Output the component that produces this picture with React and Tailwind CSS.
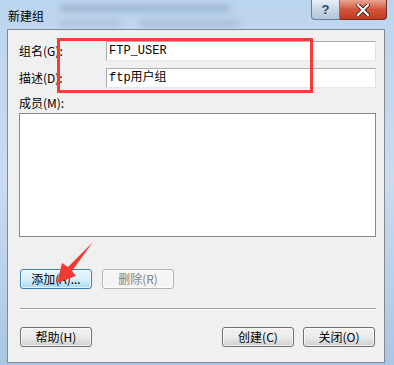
import React from "react";

const cjk = { fontFamily: '"Noto Sans CJK SC", "Liberation Sans", sans-serif' };
const mono = { fontFamily: '"Liberation Mono", "Noto Sans CJK SC", monospace' };

function Field({ label, value, mt }) {
  return (
    <div className={`flex items-center ${mt}`}>
      <div className="w-[98px] pl-[11px] text-[12px] text-black" style={cjk}>{label}</div>
      <div className="h-[20px] w-[270px] border border-[#abadb3] border-b-[#e3e9ef] border-r-[#dbdfe6] bg-white flex items-center pl-[2px] text-[12px] text-black" style={mono}>
        {value}
      </div>
    </div>
  );
}

function WinButton({ children, disabled, active, w = "w-[72px]" }) {
  let cls = "border-[#707070] bg-gradient-to-b from-[#f2f2f2] via-[#ebebeb] to-[#cfcfcf] text-black";
  if (active) cls = "border-[#3c7fb1] bg-gradient-to-b from-[#eaf6fd] via-[#d9f0fc] to-[#a7d9f5] text-black";
  if (disabled) cls = "border-[#adb2b5] bg-[#f4f4f4] text-[#838383]";
  return (
    <div className={`${w} h-[20px] rounded-[3px] border ${cls} flex items-center justify-center text-[12px] shadow-[inset_0_0_0_1px_rgba(255,255,255,0.7)]`} style={cjk}>
      {children}
    </div>
  );
}

export default function App() {
  return (
    <div className="relative w-[394px] h-[365px] overflow-hidden bg-gradient-to-b from-[#bcd5ee] via-[#c9dcf0] to-[#aac6e4]">
      {/* blurred glass background */}
      <div className="absolute left-[60px] top-[5px] w-[170px] h-[7px] bg-[#8aa2bb] blur-[3px] opacity-60"></div>
      <div className="absolute left-[140px] top-[20px] w-[100px] h-[6px] bg-[#8aa2bb] blur-[3px] opacity-50"></div>
      <div className="absolute left-[60px] top-[20px] w-[60px] h-[6px] bg-[#8aa2bb] blur-[3px] opacity-40"></div>

      {/* title bar */}
      <div className="relative flex h-[29px]">
        <div className="pl-[8px] pt-[7px] text-[12px] text-black" style={cjk}>新建组</div>
        <div className="ml-auto mr-[7px] flex h-[20px]">
          <div className="w-[29px] h-[20px] rounded-bl-[4px] border border-[#6a7f96] border-t-0 bg-gradient-to-b from-[#e8f0f8] via-[#c9d7e6] to-[#b2c4d8] flex items-center justify-center text-[13px] font-bold text-[#34495e]" style={{ fontFamily: '"Liberation Sans", sans-serif' }}>?</div>
          <div className="w-[47px] h-[20px] rounded-br-[4px] border border-[#6d2f28] border-t-0 border-l-0 bg-gradient-to-b from-[#e8a493] via-[#d1553b] to-[#c23a1e] flex items-center justify-center">
            <svg width="14" height="12" viewBox="0 0 14 12">
              <path d="M2 1 L12 11 M12 1 L2 11" stroke="#3d1a14" strokeWidth="4" strokeLinecap="square" />
              <path d="M2 1 L12 11 M12 1 L2 11" stroke="#ffffff" strokeWidth="2.2" strokeLinecap="square" />
            </svg>
          </div>
        </div>
      </div>

      {/* client area */}
      <div className="ml-[7px] w-[378px] h-[334px] bg-[#f0f0f0] border border-[#828790] flex flex-col">
        <Field label="组名(G):" value="FTP_USER" mt="mt-[11px]" />
        <Field label="描述(D):" value="ftp用户组" mt="mt-[7px]" />
        <div className="mt-[6px] pl-[11px] text-[12px] text-black leading-[18px]" style={cjk}>成员(M):</div>
        <div className="ml-[11px] mt-[1px] w-[357px] h-[124px] bg-white border border-[#828790]"></div>
        <div className="ml-[12px] mt-[32px] flex gap-[10px]">
          <WinButton active>添加(A)...</WinButton>
          <WinButton disabled>删除(R)</WinButton>
        </div>
        <div className="ml-[12px] mt-[19px] w-[356px] h-[2px] border-t border-[#a0a0a0] border-b border-b-white"></div>
        <div className="ml-[12px] mt-[17px] flex w-[355px]">
          <WinButton>帮助(H)</WinButton>
          <div className="ml-auto flex gap-[9px]">
            <WinButton>创建(C)</WinButton>
            <WinButton>关闭(O)</WinButton>
          </div>
        </div>
      </div>

      {/* annotation: red box */}
      <div className="absolute left-[57px] top-[38px] w-[256px] h-[55px] border-[3px] border-[#fc3a3a]"></div>

      {/* annotation: red arrow */}
      <svg className="absolute left-0 top-0" width="394" height="365" viewBox="0 0 394 365">
        <polygon points="93,242 72,271 76,276 57,283 62,263 68,267" fill="#f23a35" />
      </svg>
    </div>
  );
}
